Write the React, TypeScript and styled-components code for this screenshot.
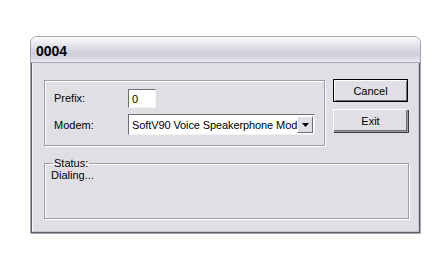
import React from 'react'
import styled, { createGlobalStyle } from 'styled-components'

const GlobalStyle = createGlobalStyle`
  body {
    margin: 0;
    background: #fff;
    font-family: "Liberation Sans", Arial, sans-serif;
    font-size: 11px;
    color: #000;
  }
`;

const Page = styled.div`
  padding: 36px 0 0 30px;
`;

const Window = styled.div`
  width: 391px;
  height: 198px;
  box-sizing: border-box;
  display: flex;
  flex-direction: column;
  border: 1px solid #a4a4ae;
  border-radius: 7px 7px 0 0;
  overflow: hidden;
  background: #e0dfe3;
`;

const TitleBar = styled.div`
  height: 26px;
  box-sizing: border-box;
  padding: 6px 0 0 5px;
  font: bold 14px "Liberation Sans", Arial, sans-serif;
  color: #000;
  background: linear-gradient(#fbfbfd 0%, #e6e6ee 30%, #cfcfdc 65%, #d8d8e4 85%, #ececf2 100%);
  border-bottom: 1px solid #a9a9b4;
`;

const Client = styled.div`
  flex: 1;
  display: flex;
  flex-direction: column;
  gap: 11px;
  padding: 17px 11px 0 12px;
  border: 1px solid #5f5f68;
  border-top: none;
  box-shadow: inset 1px 0 0 #f4f4f6, inset -1px -1px 0 #c4c4cc;
`;

const TopRow = styled.div`
  display: flex;
  align-items: flex-start;
  gap: 8px;
`;

const Etched = `
  border: 1px solid #9d9da1;
  box-shadow: inset 1px 1px 0 #fff, 1px 1px 0 #fff;
`;

const Group = styled.div`
  ${Etched}
  width: 283px;
  height: 66px;
  box-sizing: border-box;
  display: grid;
  grid-template-columns: 74px 1fr;
  grid-template-rows: 19px 21px;
  row-gap: 6px;
  align-items: center;
  padding: 8px 0 0 9px;
`;

const Label = styled.span<{ $lift?: number }>`
  position: relative;
  top: ${({ $lift }) => -($lift ?? 0)}px;
`;

const Sunken = `
  box-sizing: border-box;
  background: #fff;
  border-top: 1px solid #6f6f77;
  border-left: 1px solid #6f6f77;
  border-right: 1px solid #f2f2f4;
  border-bottom: 1px solid #f2f2f4;
`;

const TextBox = styled.div`
  ${Sunken}
  width: 28px;
  height: 19px;
  padding: 3px 0 0 3px;
`;

const Combo = styled.div`
  ${Sunken}
  width: 187px;
  height: 21px;
  display: flex;
  align-items: center;
  padding: 0 1px 0 3px;
`;

const ComboText = styled.span`
  flex: 1;
  white-space: nowrap;
  overflow: hidden;
  letter-spacing: -0.1px;
`;

const DropButton = styled.div`
  width: 16px;
  height: 17px;
  box-sizing: border-box;
  display: flex;
  align-items: center;
  justify-content: center;
  background: #e0dfe3;
  border-top: 1px solid #fff;
  border-left: 1px solid #fff;
  border-right: 1px solid #6f6f77;
  border-bottom: 1px solid #6f6f77;
`;

const ButtonColumn = styled.div`
  display: flex;
  flex-direction: column;
  gap: 7px;
  margin-top: -1px;
`;

const PushButton = styled.button<{ $default?: boolean }>`
  width: 75px;
  height: 23px;
  box-sizing: border-box;
  padding: 0;
  font: 11px "Liberation Sans", Arial, sans-serif;
  color: #000;
  background: #e0dfe3;
  border: 1px solid ${({ $default }) => ($default ? '#000' : '#fff')};
  box-shadow: ${({ $default }) =>
    $default
      ? 'inset 1px 1px 0 #fff, inset -1px -1px 0 #6f6f77'
      : 'inset -1px -1px 0 #6f6f77, 1px 1px 0 #3a3a40'};
  ${({ $default }) => (!$default ? 'border-right-color: #9d9da1; border-bottom-color: #9d9da1;' : '')}
`;

const StatusBox = styled.fieldset`
  ${Etched}
  width: 365px;
  height: 62px;
  box-sizing: border-box;
  margin: 0;
  padding: 0 0 0 6px;
`;

const Legend = styled.legend`
  padding: 0 1px;
  margin-left: 2px;
  line-height: 12px;
`;

const StatusText = styled.div`
  margin-top: 0;
`;

const App: React.FC = () => {
  return (
    <>
      <GlobalStyle />
      <Page>
        <Window>
          <TitleBar>0004</TitleBar>
          <Client>
            <TopRow>
              <Group>
                <Label $lift={1}>Prefix:</Label>
                <TextBox>0</TextBox>
                <Label>Modem:</Label>
                <Combo>
                  <ComboText>SoftV90 Voice Speakerphone Mod</ComboText>
                  <DropButton>
                    <svg width="7" height="4" viewBox="0 0 7 4">
                      <path d="M0 0h7L3.5 4z" fill="#000" />
                    </svg>
                  </DropButton>
                </Combo>
              </Group>
              <ButtonColumn>
                <PushButton $default>Cancel</PushButton>
                <PushButton>Exit</PushButton>
              </ButtonColumn>
            </TopRow>
            <StatusBox>
              <Legend>Status:</Legend>
              <StatusText>Dialing...</StatusText>
            </StatusBox>
          </Client>
        </Window>
      </Page>
    </>
  )
}

export default App
